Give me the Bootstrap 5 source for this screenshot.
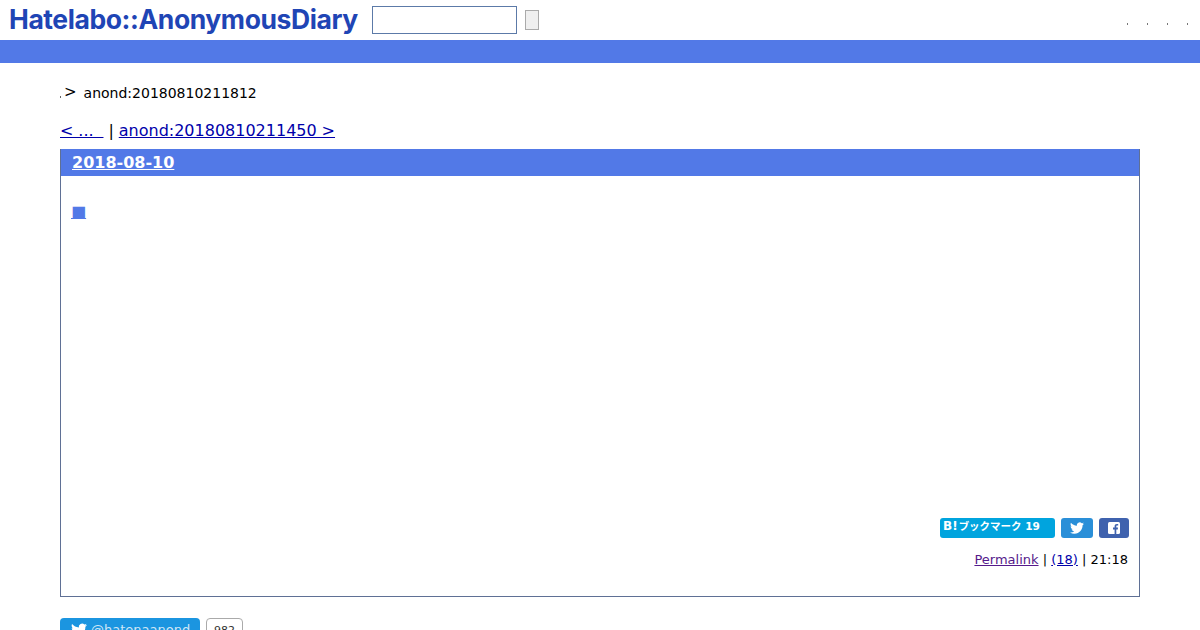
<!DOCTYPE html>
<html lang="ja">
<head>
  <meta charset="UTF-8" />
  <title>anond:20180810211812</title>
  <link href="https://cdn.jsdelivr.net/npm/bootstrap@5.3.0/dist/css/bootstrap.min.css" rel="stylesheet" />
  <style>
    body{font-family:"DejaVu Sans","Noto Sans CJK JP",sans-serif;font-size:14px;color:#000;background:#fff}
    a{color:#00a}
    .top-head{height:40px;padding-left:9px}
    .site-logo{font-family:Inter,sans-serif;font-weight:700;font-size:26.5px;line-height:38px;height:40px;color:#1f45b5;width:349px;white-space:nowrap;letter-spacing:-.42px}
    .search-box{width:145px;height:28px;margin-left:14px;border:1px solid #5c7aa8;background:#fff;padding:0}
    .search-btn{width:14px;height:20px;margin-left:8px;border:1px solid #aaa;background:#efefef;padding:0}
    .head-links{gap:19px;padding-right:12px;padding-top:8px}
    .tiny-dot{width:1px;height:2px;background:#777}
    .blue-strip{height:23px;background:#5279e7}
    .page-body{padding:0 60px}
    .crumbs{height:20px;margin-top:20px;line-height:20px}
    .crumb-dot{width:1px;height:2px;background:#666;margin-top:13px}
    .crumb-arrow{font-size:15px;margin:0 7px 0 3px;line-height:19px}
    .pager{font-size:16px;line-height:22px;margin-top:17px;margin-bottom:7px;word-spacing:-.15px}
    .day-box{height:448px;border:1px solid #5f7095;border-top:0}
    .day-title{height:27px;background:#5279e7;padding-left:11px;font-size:16px;font-weight:700;line-height:27px}
    .day-title a{color:#fff}
    .day-main{padding:25px 10px 0}
    .sect-mark{color:#5279e7;font-size:16px;line-height:22px}
    .share-row{gap:6px;margin-top:295px}
    .share-btn{height:20px;border-radius:3px;color:#fff}
    .hb-btn{width:115px;background:#00a4de;font-size:10.5px;font-weight:700;line-height:16px;padding-left:3px}
    .hb-btn b{font-size:12px;margin-right:1px}
    .tw-btn{width:32px;background:#2a8fd8}
    .fb-btn{width:30px;background:#3f62ae}
    .post-foot{font-size:13px;line-height:20px;margin-top:12px;padding-right:1px}
    .post-foot .perma{color:#551a8b}
    .follow-row{margin-top:21px;gap:6px}
    .follow-btn{width:140px;height:28px;background:#1b95e0;border-radius:4px;color:#cfe6f6;font-size:13px;line-height:24px;padding-left:11px;gap:4px}
    .follow-count{width:37px;height:28px;border:1px solid #aaa;border-radius:4px;font-size:11px;text-align:center;line-height:24px;color:#333}
  </style>
</head>
<body>
<header class="top-head d-flex align-items-center">
  <div class="site-logo">Hatelabo::AnonymousDiary</div>
  <input class="search-box" type="text" />
  <button class="search-btn" type="button"></button>
  <div class="head-links d-flex ms-auto">
    <span class="tiny-dot"></span><span class="tiny-dot"></span><span class="tiny-dot"></span><span class="tiny-dot"></span>
  </div>
</header>
<div class="blue-strip"></div>

<main class="page-body">
  <div class="crumbs d-flex">
    <span class="crumb-dot"></span>
    <span class="crumb-arrow">&gt;</span>
    <span>anond:20180810211812</span>
  </div>
  <div class="pager"><a href="#">&lt; ...&nbsp;&nbsp;</a> | <a href="#">anond:20180810211450 &gt;</a></div>

  <section class="day-box">
    <div class="day-title"><a href="#">2018-08-10</a></div>
    <div class="day-main">
      <div><a class="sect-mark" href="#">■</a></div>
      <div class="share-row d-flex justify-content-end">
        <div class="share-btn hb-btn"><b>B!</b>ブックマーク 19</div>
        <div class="share-btn tw-btn d-flex align-items-center justify-content-center">
          <svg width="14" height="14" viewBox="0 0 24 24" fill="#fff"><path d="M23.953 4.57a10 10 0 01-2.825.775 4.958 4.958 0 002.163-2.723c-.951.555-2.005.959-3.127 1.184a4.92 4.92 0 00-8.384 4.482C7.69 8.095 4.067 6.13 1.64 3.162a4.822 4.822 0 00-.666 2.475c0 1.71.87 3.213 2.188 4.096a4.904 4.904 0 01-2.228-.616v.06a4.923 4.923 0 003.946 4.827 4.996 4.996 0 01-2.212.085 4.936 4.936 0 004.604 3.417 9.867 9.867 0 01-6.102 2.105c-.39 0-.779-.023-1.17-.067a13.995 13.995 0 007.557 2.209c9.053 0 13.998-7.496 13.998-13.985 0-.21 0-.42-.015-.63A9.935 9.935 0 0024 4.59z"/></svg>
        </div>
        <div class="share-btn fb-btn d-flex align-items-center justify-content-center">
          <svg width="12" height="12" viewBox="0 0 12 12"><rect width="12" height="12" rx="1.5" fill="#fff"/><path d="M8.3 12V7.4h1.5l.2-1.8H8.3V4.5c0-.5.2-.9.9-.9h1V2c-.3 0-.8-.1-1.3-.1-1.4 0-2.3.8-2.3 2.4v1.3H5v1.8h1.6V12z" fill="#3f62ae"/></svg>
        </div>
      </div>
      <div class="post-foot text-end"><a class="perma" href="#">Permalink</a> | <a href="#">(18)</a> | 21:18</div>
    </div>
  </section>

  <div class="follow-row d-flex">
    <div class="follow-btn d-flex">
      <svg class="mt-1" width="16" height="16" viewBox="0 0 24 24" fill="#fff"><path d="M23.953 4.57a10 10 0 01-2.825.775 4.958 4.958 0 002.163-2.723c-.951.555-2.005.959-3.127 1.184a4.92 4.92 0 00-8.384 4.482C7.69 8.095 4.067 6.13 1.64 3.162a4.822 4.822 0 00-.666 2.475c0 1.71.87 3.213 2.188 4.096a4.904 4.904 0 01-2.228-.616v.06a4.923 4.923 0 003.946 4.827 4.996 4.996 0 01-2.212.085 4.936 4.936 0 004.604 3.417 9.867 9.867 0 01-6.102 2.105c-.39 0-.779-.023-1.17-.067a13.995 13.995 0 007.557 2.209c9.053 0 13.998-7.496 13.998-13.985 0-.21 0-.42-.015-.63A9.935 9.935 0 0024 4.59z"/></svg>
      <span>@hatenaanond</span>
    </div>
    <div class="follow-count">982</div>
  </div>
</main>

<script src="https://cdn.jsdelivr.net/npm/bootstrap@5.3.0/dist/js/bootstrap.bundle.min.js"></script>
</body>
</html>
